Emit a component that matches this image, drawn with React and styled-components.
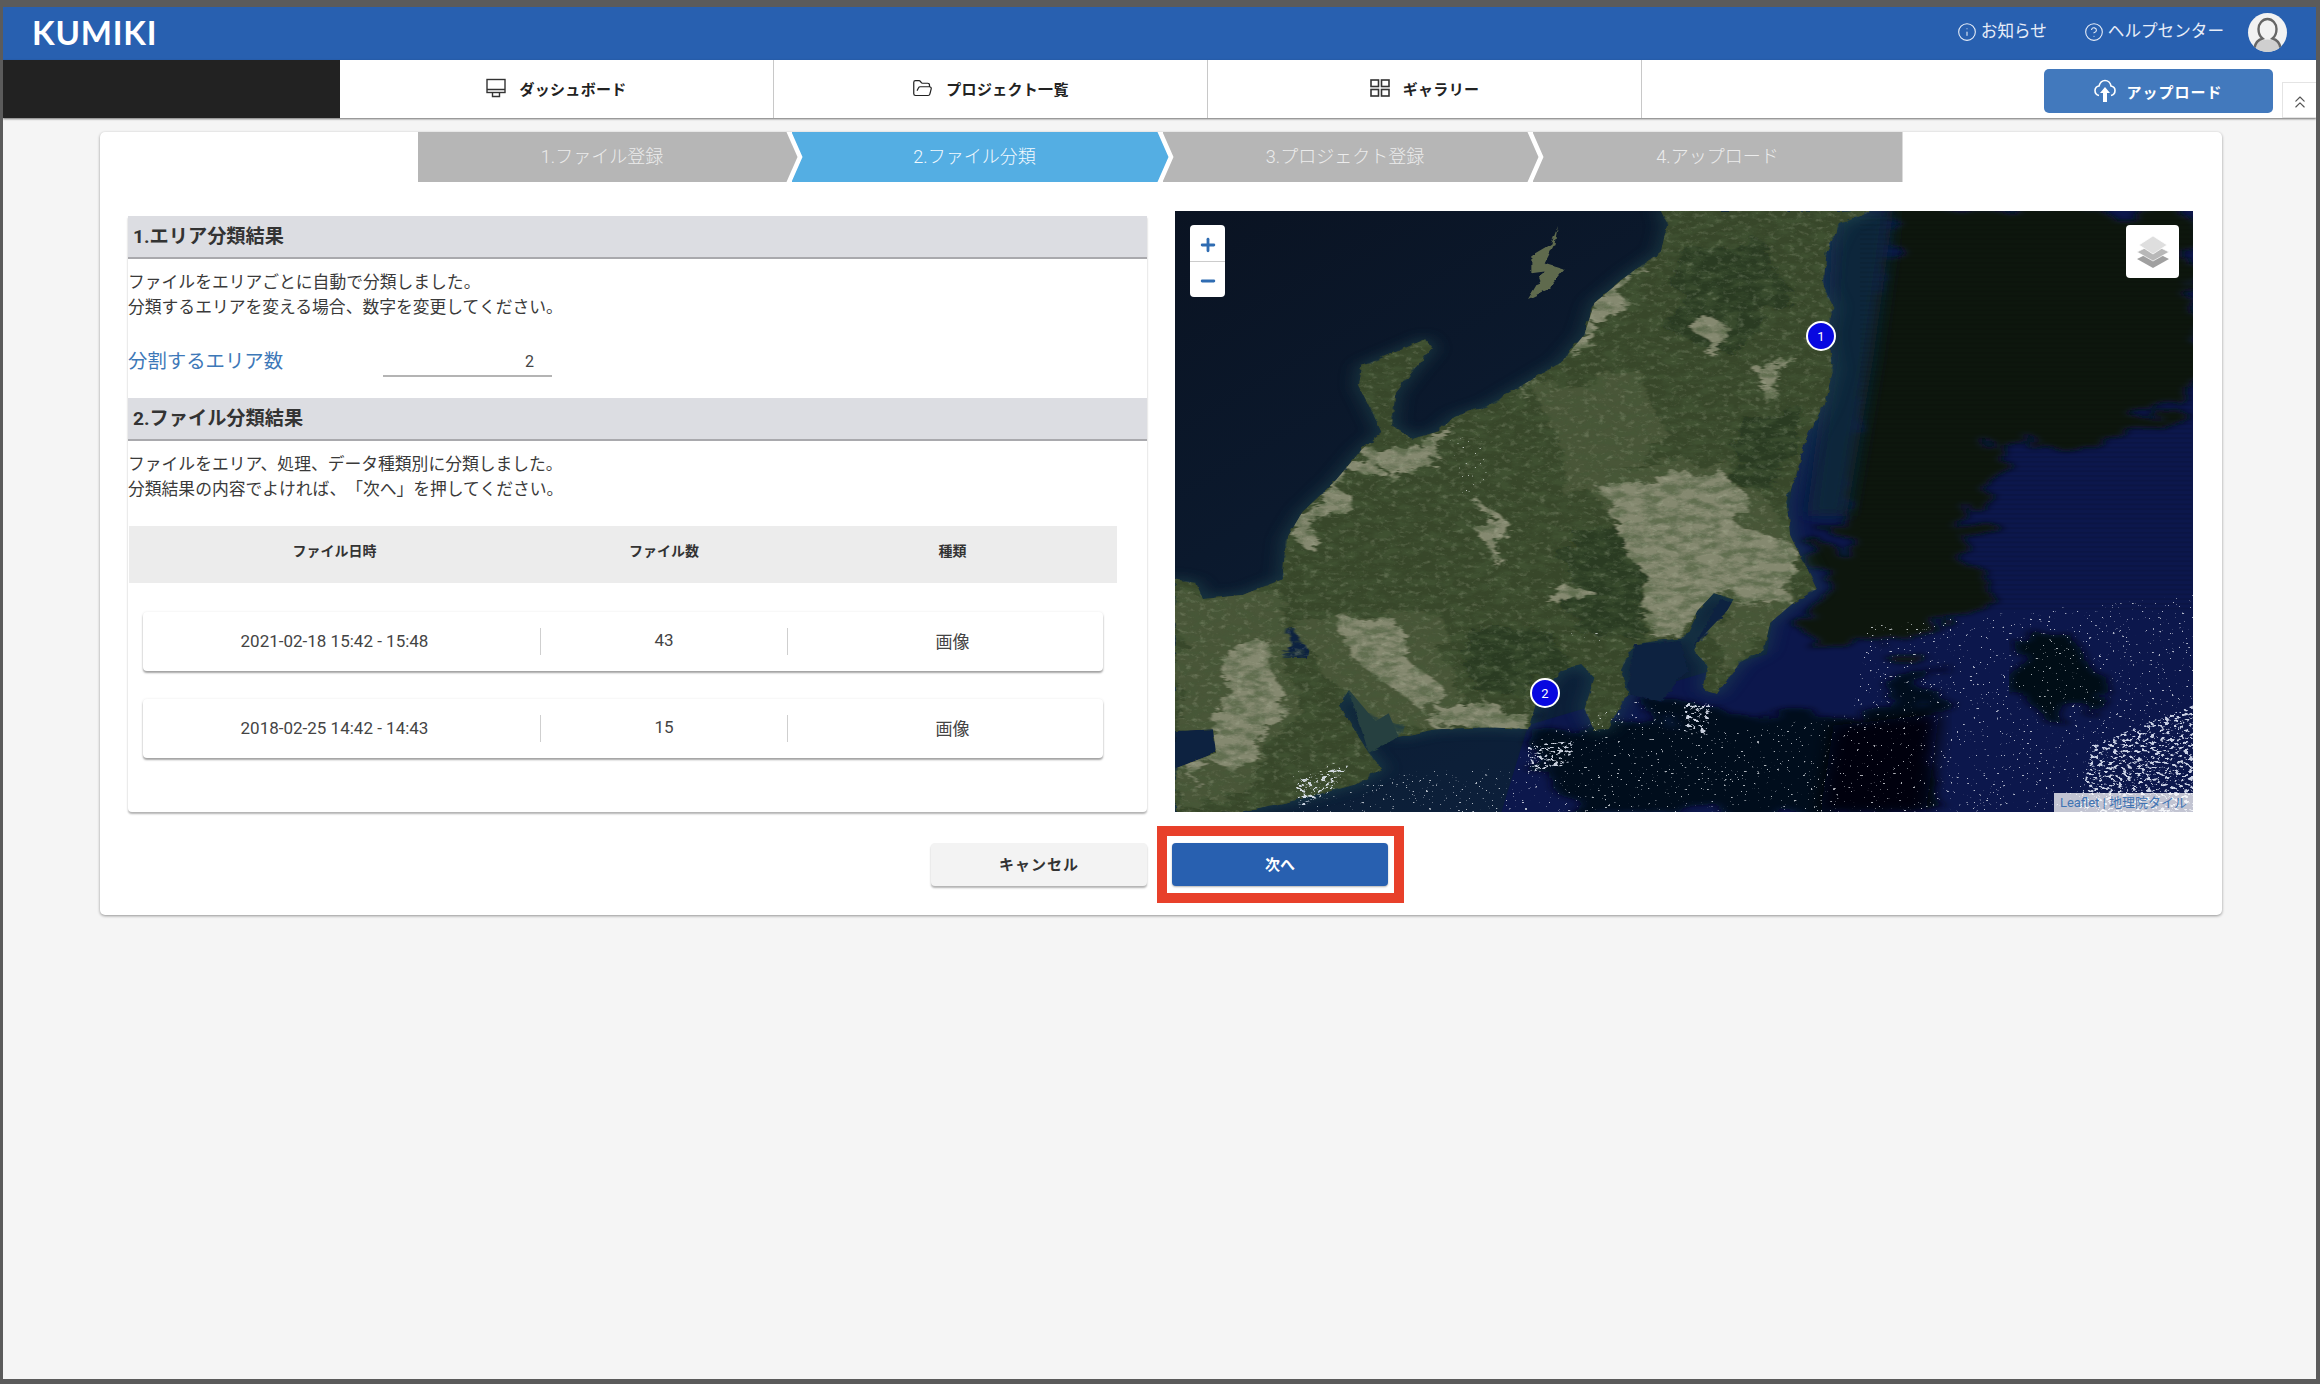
import styled, { createGlobalStyle } from "styled-components";
import { ChevronsUp, CircleHelp, FolderOpen, Info, Minus, Plus } from "lucide-react";

const GlobalStyle = createGlobalStyle`
  html, body {
    margin: 0;
    padding: 0;
    background: #f5f5f5;
  }
  * {
    box-sizing: border-box;
  }
  body {
    font-family: Roboto, "Noto Sans CJK JP", sans-serif;
    color: #333;
    text-spacing-trim: space-all;
  }
`;

const Frame = styled.div`
  display: flex;
  flex-direction: column;
  width: 2320px;
  height: 1384px;
  overflow: hidden;
  background: #f5f5f5;
  border-style: solid;
  border-color: #5b5b5b;
  border-width: 7px 4px 5px 3px;
`;

const Header = styled.header`
  display: flex;
  align-items: center;
  flex: 0 0 53px;
  padding: 0 29px 3px;
  background: #2860b0;
  color: #fff;
`;

const Logo = styled.div`
  font-family: Lato, sans-serif;
  font-size: 33px;
  font-weight: 700;
  letter-spacing: 0.8px;
`;

const HeaderLinks = styled.div`
  display: flex;
  align-items: center;
  gap: 37px;
  margin-left: auto;
`;

const HeaderLink = styled.div`
  display: flex;
  align-items: center;
  gap: 4px;
  font-size: 16.6px;
  line-height: 20px;
  color: #e8eef8;
`;

const Avatar = styled.div`
  width: 39px;
  height: 39px;
  margin-left: 24px;
  border-radius: 50%;
  overflow: hidden;
  background: #f2f2f2;
`;

const Nav = styled.nav`
  display: flex;
  flex: 0 0 58px;
  background: #fff;
  box-shadow: 0 1px 2px rgba(0, 0, 0, 0.55);
  position: relative;
`;

const NavBlank = styled.div`
  width: 337px;
  background: #222;
`;

const Tab = styled.div`
  display: flex;
  align-items: center;
  justify-content: center;
  gap: 13px;
  width: 434px;
  padding-bottom: 2px;
  border-right: 1px solid #c8c8c8;
  color: #222;
  font-size: 15px;
  font-weight: 700;
  letter-spacing: 0.3px;
`;

const NavRight = styled.div`
  display: flex;
  flex: 1;
  justify-content: flex-end;
  gap: 9px;
  padding-top: 9px;
`;

const UploadButton = styled.button`
  display: flex;
  align-items: center;
  justify-content: center;
  gap: 10px;
  width: 229px;
  height: 44px;
  border: none;
  border-radius: 5px;
  background: #4279bd;
  color: #fff;
  font-family: inherit;
  font-size: 15px;
  font-weight: 700;
  letter-spacing: 1px;
`;

const CollapseButton = styled.button`
  display: flex;
  align-items: center;
  justify-content: center;
  width: 34px;
  height: 36px;
  margin-top: 13px;
  padding: 4px 0 0;
  border: 1px solid #e4e4e4;
  border-right: none;
  background: #fff;
  color: #555;
`;

const Content = styled.main`
  padding: 14px 94px 0 97px;
`;

const Card = styled.section`
  height: 783px;
  border-radius: 5px;
  background: #fff;
  box-shadow: 0 1px 3px rgba(0, 0, 0, 0.4);
`;

const Stepper = styled.div`
  display: flex;
  justify-content: center;
  padding-right: 2px;
`;

const Step = styled.div`
  display: flex;
  align-items: center;
  justify-content: center;
  width: ${(props) => props.$width}px;
  height: 50px;
  margin-left: ${(props) => (props.$first ? 0 : -6)}px;
  padding: 0 ${(props) => (props.$last ? 0 : 11)}px 4px 0;
  background: ${(props) => (props.$active ? "#54aee3" : "#b6b6b6")};
  color: ${(props) => (props.$active ? "#f2f9fe" : "#ececec")};
  font-size: 18px;
  font-weight: 300;
  clip-path: ${(props) =>
    props.$first
      ? "polygon(0 0, calc(100% - 11px) 0, 100% 50%, calc(100% - 11px) 100%, 0 100%)"
      : props.$last
      ? "polygon(0 0, 100% 0, 100% 100%, 0 100%, 11px 50%)"
      : "polygon(0 0, calc(100% - 11px) 0, 100% 50%, calc(100% - 11px) 100%, 0 100%, 11px 50%)"};
`;

const Body = styled.div`
  display: grid;
  grid-template-columns: 1019px 1018px;
  gap: 28px;
  padding: 29px 28px 0;
`;

const LeftPanel = styled.div`
  height: 596px;
  margin-top: 5px;
  border-radius: 0 0 4px 4px;
  background: #fff;
  box-shadow: 0 2px 2px rgba(0, 0, 0, 0.3);
`;

const SectionTitle = styled.h2`
  display: flex;
  align-items: center;
  height: 43px;
  margin: 0;
  padding: 0 0 4px 5px;
  border-bottom: 2px solid #a9a9ad;
  background: #dcdde2;
  color: #333;
  font-size: 19.2px;
  font-weight: 700;
`;

const Description = styled.p`
  margin: 0;
  padding-top: 11px;
  font-size: 16.8px;
  line-height: 25px;
  color: #3a3a3a;
`;

const AreaRow = styled.div`
  display: flex;
  align-items: flex-end;
  height: 57px;
  margin-bottom: 21px;
`;

const AreaLabel = styled.label`
  width: 255px;
  padding-bottom: 1px;
  color: #3d78b8;
  font-size: 19.4px;
  line-height: 28px;
`;

const AreaInput = styled.div`
  width: 169px;
  height: 30px;
  padding: 4px 18px 0 0;
  border-bottom: 2px solid #b4b4b4;
  color: #444;
  font-size: 16px;
  line-height: 22px;
  text-align: right;
`;

const TableHead = styled.div`
  display: grid;
  grid-template-columns: 411px 248px 329px;
  width: 988px;
  height: 57px;
  margin: 24px 0 29px 1px;
  padding-top: 16px;
  background: #ececec;
  color: #333;
  font-size: 14px;
  font-weight: 700;
  line-height: 18px;
  text-align: center;
`;

const FileRow = styled.div`
  display: grid;
  grid-template-columns: 397px 248px 315px;
  align-items: center;
  width: 960px;
  height: 59px;
  margin: 0 0 28px 15px;
  border-radius: 4px;
  background: #fff;
  box-shadow: 0 2px 2px rgba(0, 0, 0, 0.35), 0 0 3px rgba(0, 0, 0, 0.08);
  color: #444;
  font-size: 17px;
  text-align: center;
`;

const DateCell = styled.div`
  padding: 0 14px 2px 0;
`;

const CountCell = styled.div`
  height: 27px;
  line-height: 25px;
  border-left: 1px solid #cfcfcf;
  border-right: 1px solid #cfcfcf;
`;

const TypeCell = styled.div`
  padding: 0 0 3px 14px;
`;

const MapBox = styled.div`
  position: relative;
  height: 601px;
  overflow: hidden;
  background: #0a1526;
`;

const MapImage = styled.svg`
  display: block;
  width: 100%;
  height: 100%;
`;

const ZoomControl = styled.div`
  position: absolute;
  top: 14px;
  left: 15px;
  width: 35px;
  border-radius: 4px;
  background: #fff;
  color: #2f6cb2;
`;

const ZoomButton = styled.div`
  display: flex;
  align-items: center;
  justify-content: center;
  height: 36px;
  padding-top: 3px;
  border-top: ${(props) => (props.$divider ? "1px solid #ccc" : "none")};
`;

const LayerButton = styled.div`
  position: absolute;
  top: 14px;
  right: 14px;
  display: flex;
  align-items: center;
  justify-content: center;
  width: 53px;
  height: 53px;
  border-radius: 4px;
  background: #fff;
`;

const Marker = styled.div`
  position: absolute;
  left: ${(props) => props.$x}px;
  top: ${(props) => props.$y}px;
  display: flex;
  align-items: center;
  justify-content: center;
  width: 30px;
  height: 30px;
  border: 2px solid #fff;
  border-radius: 50%;
  background: #0808e0;
  color: #fff;
  font-size: 13px;
`;

const Attribution = styled.div`
  position: absolute;
  right: 0;
  bottom: 0;
  padding: 0 6px;
  background: rgba(255, 255, 255, 0.75);
  color: #3f74b4;
  font-size: 13px;
  line-height: 19px;
`;

const Footer = styled.div`
  display: flex;
  justify-content: center;
  gap: 25px;
  padding: 31px 3px 0 0;
`;

const CancelButton = styled.button`
  width: 216px;
  height: 43px;
  padding: 0 0 2px;
  border: none;
  border-radius: 4px;
  background: #f3f3f3;
  box-shadow: 0 2px 2px rgba(0, 0, 0, 0.3);
  color: #333;
  font-family: inherit;
  font-size: 15px;
  font-weight: 700;
  letter-spacing: 1px;
`;

const NextWrap = styled.div`
  position: relative;
`;

const NextButton = styled.button`
  display: block;
  width: 216px;
  height: 43px;
  padding: 0 0 2px;
  border: none;
  border-radius: 4px;
  background: #2860b0;
  box-shadow: 0 1px 2px rgba(0, 0, 0, 0.3);
  color: #fff;
  font-family: inherit;
  font-size: 15px;
  font-weight: 700;
`;

// the red box drawn over the screenshot around the next button
const Highlight = styled.div`
  position: absolute;
  inset: -17px -16px -17px -15px;
  border: 10px solid #e8402a;
  pointer-events: none;
`;

const MonitorIcon = () => (
  <svg width="20" height="20" viewBox="0 0 20 20" fill="none" stroke="#333" strokeWidth="1.4">
    <rect x="1" y="1.5" width="18" height="13" />
    <path d="M1 11.5h18M6.5 14.5v4h7v-4" />
  </svg>
);

const GridIcon = () => (
  <svg width="20" height="20" viewBox="0 0 20 20" fill="none" stroke="#333" strokeWidth="1.6">
    <rect x="1" y="2" width="7.5" height="6.5" />
    <rect x="11.5" y="2" width="7.5" height="6.5" />
    <rect x="1" y="11.5" width="7.5" height="6.5" />
    <rect x="11.5" y="11.5" width="7.5" height="6.5" />
  </svg>
);

const CloudArrowIcon = () => (
  <svg width="22" height="24" viewBox="0 0 22 24" fill="none" stroke="#fff" strokeWidth="1.6">
    <path d="M5 16.5C2.5 16 1 14 1 11.500C1 9 3 7 5 7C6 3.500 8.500 1.500 11 1.500C14 1.500 16.500 4 17 7C19.500 7.500 21 9.500 21 11.500C21 14 19.500 16 17 16.500" />
    <path d="M11 8L16 14H13V23H9V14H6Z" fill="#fff" stroke="none" />
  </svg>
);

const LayersIcon = () => (
  <svg width="34" height="32" viewBox="0 0 34 32">
    <path d="M17 15L33 23L17 32L1 23Z" fill="#a0a0a0" />
    <path d="M17 8L33 16L17 25L1 16Z" fill="#b8b8b8" stroke="#fff" strokeWidth="0.7" />
    <path d="M17 0L31 9L17 18L3 9Z" fill="#dedede" stroke="#fff" strokeWidth="0.7" />
  </svg>
);

const AvatarIcon = () => (
  <svg width="39" height="39" viewBox="0 0 39 39">
    <path d="M5 39C5 30 12 26.500 19.500 26.500C27 26.500 34 30 34 39Z" fill="#cfcfcf" />
    <path
      d="M6.500 35C7.500 28.500 11 26.500 14.500 25.500C11.500 23 10.500 19.500 10.500 16C10.500 10.500 14.500 6 19.500 6C24.500 6 28.500 10.500 28.500 16C28.500 19.500 27.500 23 24.500 25.500C28 26.500 31.500 28.500 32.500 35"
      fill="none"
      stroke="#666"
      strokeWidth="2.4"
    />
  </svg>
);

const LAND =
  "M740 27L1060 27L1010 60L990 130L985 215L1000 270L990 340L1000 430L985 520L960 600L945 680L930 770L935 850L965 950L975 985L940 1020L905 1070L895 1140L860 1170L825 1250L805 1240L810 1180L790 1140L800 1110L840 1040L850 1010L820 995L795 1040L775 1110L740 1115L700 1125L680 1190L690 1250L660 1340L640 1345L625 1290L640 1210L620 1175L590 1190L555 1260L540 1340L480 1335L400 1340L345 1360L330 1300L310 1320L270 1240L280 1215L255 1280L300 1400L320 1440L280 1480L190 1520L100 1552L8 1552L8 1440L70 1400L65 1340L8 1345L8 960L40 970L50 1010L110 1000L170 960L175 860L200 790L250 710L290 630L320 590L300 520L285 470L290 420L340 385L385 352L395 375L370 425L340 490L335 570L365 605L405 585L430 548L480 520L540 460L590 410L625 340L640 260L690 190L740 130L750 60Z";

const PLAINS = [
  "M650 730L700 720L760 700L830 680L870 760L860 830L930 860L960 950L930 1010L860 1000L800 1030L770 1100L720 1100L720 1000L700 880L660 800Z",
  "M640 240L700 190L745 130L720 160L680 280L630 370L600 400Z",
  "M310 640L400 590L430 550L410 640L370 680L320 710Z",
  "M200 800L250 720L300 620L320 650L270 730L210 880L190 870Z",
  "M260 1060L340 1060L370 1180L420 1240L380 1290L300 1190L270 1150Z",
  "M400 1280L530 1290L535 1340L400 1340Z",
  "M100 1140L140 1100L170 1250L130 1400L60 1430L30 1500L60 1380Z",
  "M540 480L560 440L545 520Z M800 290L825 300L820 390L800 380Z M480 760L500 820L490 930L470 850Z",
  "M880 420L930 380L920 470L880 500Z M580 960L640 990L610 1030L580 1030Z",
];

const FOOTHILLS = [
  "M620 700L830 650L950 860L960 960L880 1150L820 1180L840 1040L770 1120L700 1110L700 900Z",
  "M8 970L50 1010L170 980L190 1300L100 1500L8 1540Z",
  "M560 480L700 420L760 620L600 760Z",
  "M180 1060L400 1040L440 1280L400 1340L280 1300Z",
];

const FORESTS = [
  "M600 820L700 830L720 1060L700 1110L610 1090L600 950Z",
  "M860 540L960 530L935 700L850 720Z",
  "M440 1100L570 1080L590 1180L540 1260L450 1240Z",
  "M760 130L880 90L940 230L860 400L760 340Z",
];

const SatelliteMap = () => (
  <MapImage viewBox="8 27 1534 1523" preserveAspectRatio="none">
    <defs>
      <linearGradient id="westSea" x1="0" y1="0" x2="1" y2="1">
        <stop offset="0" stopColor="#0a1322" />
        <stop offset="0.6" stopColor="#0c1f38" />
        <stop offset="1" stopColor="#0c1c44" />
      </linearGradient>
      <filter id="blurEdge">
        <feGaussianBlur stdDeviation="14" />
      </filter>
      <filter id="softRough" x="-10%" y="-10%" width="120%" height="120%">
        <feTurbulence type="fractalNoise" baseFrequency="0.012 0.02" numOctaves="4" seed="3" result="n" />
        <feDisplacementMap in="SourceGraphic" in2="n" scale="120" />
        <feGaussianBlur stdDeviation="7" />
      </filter>
      <filter id="rough" x="-10%" y="-10%" width="120%" height="120%">
        <feTurbulence type="fractalNoise" baseFrequency="0.014" numOctaves="3" seed="14" result="big" />
        <feDisplacementMap in="SourceGraphic" in2="big" scale="70" result="moved" />
        <feTurbulence type="fractalNoise" baseFrequency="0.08" numOctaves="4" seed="4" result="fine" />
        <feDisplacementMap in="moved" in2="fine" scale="26" />
        <feGaussianBlur stdDeviation="1.500" />
      </filter>
      <filter id="coast" x="-5%" y="-5%" width="110%" height="110%">
        <feTurbulence type="fractalNoise" baseFrequency="0.05" numOctaves="3" seed="9" result="n" />
        <feDisplacementMap in="SourceGraphic" in2="n" scale="10" />
      </filter>
      <filter id="grainDark">
        <feTurbulence type="fractalNoise" baseFrequency="0.035 0.05" numOctaves="5" seed="11" />
        <feColorMatrix values="0 0 0 0 0.06  0 0 0 0 0.1  0 0 0 0 0.04  3.200 0 0 0 -1.25" />
      </filter>
      <filter id="grainLight">
        <feTurbulence type="fractalNoise" baseFrequency="0.09" numOctaves="4" seed="31" />
        <feColorMatrix values="0 0 0 0 0.6  0 0 0 0 0.64  0 0 0 0 0.48  3 0 0 0 -1.6" />
      </filter>
      <filter id="specks">
        <feTurbulence type="fractalNoise" baseFrequency="0.2" numOctaves="3" seed="7" />
        <feColorMatrix values="0 0 0 0 0.95  0 0 0 0 0.97  0 0 0 0 1  14 0 0 0 -10" />
      </filter>
      <filter id="denseSpecks">
        <feTurbulence type="fractalNoise" baseFrequency="0.14" numOctaves="3" seed="21" />
        <feColorMatrix values="0 0 0 0 0.85  0 0 0 0 0.9  0 0 0 0 1  10 0 0 0 -5.500" />
      </filter>
      <pattern id="scan" width="20" height="12" patternUnits="userSpaceOnUse">
        <rect width="20" height="5" fill="#000" opacity="0.25" />
      </pattern>
      <clipPath id="landClip">
        <path d={LAND} />
      </clipPath>
      <clipPath id="cloudClip">
        <path d="M1050 1080L1542 1000L1542 1550L180 1550L340 1450L520 1440L540 1370L700 1270L820 1270L830 1350L1030 1300Z" />
        <path d="M420 610L470 590L480 700L440 760L430 700Z M600 1080L650 1080L650 1120L610 1120Z M180 1440L280 1420L250 1500L190 1540Z" />
      </clipPath>
      <clipPath id="denseClip">
        <path d="M1390 1380L1542 1280L1542 1550L1370 1550Z M540 1380L610 1370L600 1430L540 1450Z M775 1275L815 1275L810 1355L775 1345Z M190 1470L270 1430L240 1500L195 1540Z" />
      </clipPath>
    </defs>

    <rect x="8" y="27" width="1534" height="1523" fill="url(#westSea)" />
    <path d="M1000 27L1542 27L1542 1550L500 1550L540 1330L900 1150Z" fill="#0c174c" />
    <path
      d="M1090 27L1542 27L1542 530L1350 640L1280 580L1220 780L1200 900L1240 1010L1090 1140L950 1120L1010 800L1040 400Z"
      fill="#0a120f"
      filter="url(#softRough)"
    />
    <path d="M1000 27L1090 27L1060 400L1020 800L960 800L990 400Z" fill="#10263a" filter="url(#blurEdge)" />
    <rect x="1040" y="40" width="500" height="1000" fill="url(#scan)" opacity="0.35" />
    <path
      d="M540 1340L800 1280L1040 1320L1160 1160L1130 1550L600 1550Z"
      fill="#060a1c"
      filter="url(#softRough)"
    />
    <path d="M1000 1330L1160 1300L1140 1550L980 1550Z" fill="#020308" filter="url(#blurEdge)" />
    <path d="M1280 1130L1360 1100L1420 1250L1330 1330L1280 1260Z" fill="#050816" filter="url(#softRough)" />

    <path d={LAND} fill="#1c4048" stroke="#2b5a5a" strokeWidth="10" filter="url(#blurEdge)" opacity="0.55" />
    <g filter="url(#coast)">
      <path d={LAND} fill="#38462a" />
      <path d="M585 65L575 110L545 140L545 185L565 180L540 250L570 225L595 175L565 160L580 110Z" fill="#5f6a4e" />
      <path d="M700 1125L770 1118L780 1190L740 1270L690 1250Z M8 1345L65 1340L70 1400L8 1440Z M160 1090L215 1070L205 1160L170 1160Z M830 1010L850 1020L810 1100L790 1130Z" fill="#0e2040" />
      <path d="M270 1240L280 1215L300 1230L370 1290L345 1360L300 1400Z" fill="#25403f" />
    </g>
    <g clipPath="url(#landClip)">
      <g filter="url(#rough)">
        {FOOTHILLS.map((d) => (
          <path key={d} d={d} fill="#4a5639" />
        ))}
        {FORESTS.map((d) => (
          <path key={d} d={d} fill="#2b3a21" />
        ))}
        {PLAINS.map((d) => (
          <path key={d} d={d} fill="#858970" />
        ))}
      </g>
      <rect x="8" y="27" width="1534" height="1523" filter="url(#grainDark)" opacity="0.55" />
      <rect x="8" y="27" width="1534" height="1523" filter="url(#grainLight)" opacity="0.22" />
    </g>
    <rect x="8" y="27" width="1534" height="1523" filter="url(#specks)" clipPath="url(#cloudClip)" opacity="0.7" />
    <rect x="8" y="27" width="1534" height="1523" filter="url(#denseSpecks)" clipPath="url(#denseClip)" opacity="0.85" />
  </MapImage>
);

const App = () => {
  return (
    <Frame>
      <GlobalStyle />
      <Header>
        <Logo>KUMIKI</Logo>
        <HeaderLinks>
          <HeaderLink>
            <Info size={20} strokeWidth={1.3} />
            お知らせ
          </HeaderLink>
          <HeaderLink>
            <CircleHelp size={20} strokeWidth={1.3} />
            ヘルプセンター
          </HeaderLink>
        </HeaderLinks>
        <Avatar>
          <AvatarIcon />
        </Avatar>
      </Header>
      <Nav>
        <NavBlank />
        <Tab>
          <MonitorIcon />
          ダッシュボード
        </Tab>
        <Tab>
          <FolderOpen size={21} strokeWidth={1.4} />
          プロジェクト一覧
        </Tab>
        <Tab>
          <GridIcon />
          ギャラリー
        </Tab>
        <NavRight>
          <UploadButton>
            <CloudArrowIcon />
            アップロード
          </UploadButton>
          <CollapseButton>
            <ChevronsUp size={20} strokeWidth={1.4} />
          </CollapseButton>
        </NavRight>
      </Nav>
      <Content>
        <Card>
          <Stepper>
            <Step $first $width={380}>1.ファイル登録</Step>
            <Step $active $width={377}>2.ファイル分類</Step>
            <Step $width={376}>3.プロジェクト登録</Step>
            <Step $last $width={370}>4.アップロード</Step>
          </Stepper>
          <Body>
            <LeftPanel>
              <SectionTitle>1.エリア分類結果</SectionTitle>
              <Description>
                ファイルをエリアごとに自動で分類しました。
                <br />
                分類するエリアを変える場合、数字を変更してください。
              </Description>
              <AreaRow>
                <AreaLabel>分割するエリア数</AreaLabel>
                <AreaInput>2</AreaInput>
              </AreaRow>
              <SectionTitle>2.ファイル分類結果</SectionTitle>
              <Description>
                ファイルをエリア、処理、データ種類別に分類しました。
                <br />
                分類結果の内容でよければ、「次へ」を押してください。
              </Description>
              <TableHead>
                <div>ファイル日時</div>
                <div>ファイル数</div>
                <div>種類</div>
              </TableHead>
              <FileRow>
                <DateCell>2021-02-18 15:42 - 15:48</DateCell>
                <CountCell>43</CountCell>
                <TypeCell>画像</TypeCell>
              </FileRow>
              <FileRow>
                <DateCell>2018-02-25 14:42 - 14:43</DateCell>
                <CountCell>15</CountCell>
                <TypeCell>画像</TypeCell>
              </FileRow>
            </LeftPanel>
            <MapBox>
              <SatelliteMap />
              <ZoomControl>
                <ZoomButton>
                  <Plus size={20} strokeWidth={3.4} />
                </ZoomButton>
                <ZoomButton $divider>
                  <Minus size={20} strokeWidth={3.4} />
                </ZoomButton>
              </ZoomControl>
              <LayerButton>
                <LayersIcon />
              </LayerButton>
              <Marker $x={631} $y={110}>1</Marker>
              <Marker $x={355} $y={467}>2</Marker>
              <Attribution>Leaflet | 地理院タイル</Attribution>
            </MapBox>
          </Body>
          <Footer>
            <CancelButton>キャンセル</CancelButton>
            <NextWrap>
              <NextButton>次へ</NextButton>
              <Highlight />
            </NextWrap>
          </Footer>
        </Card>
      </Content>
    </Frame>
  );
};

export default App;
